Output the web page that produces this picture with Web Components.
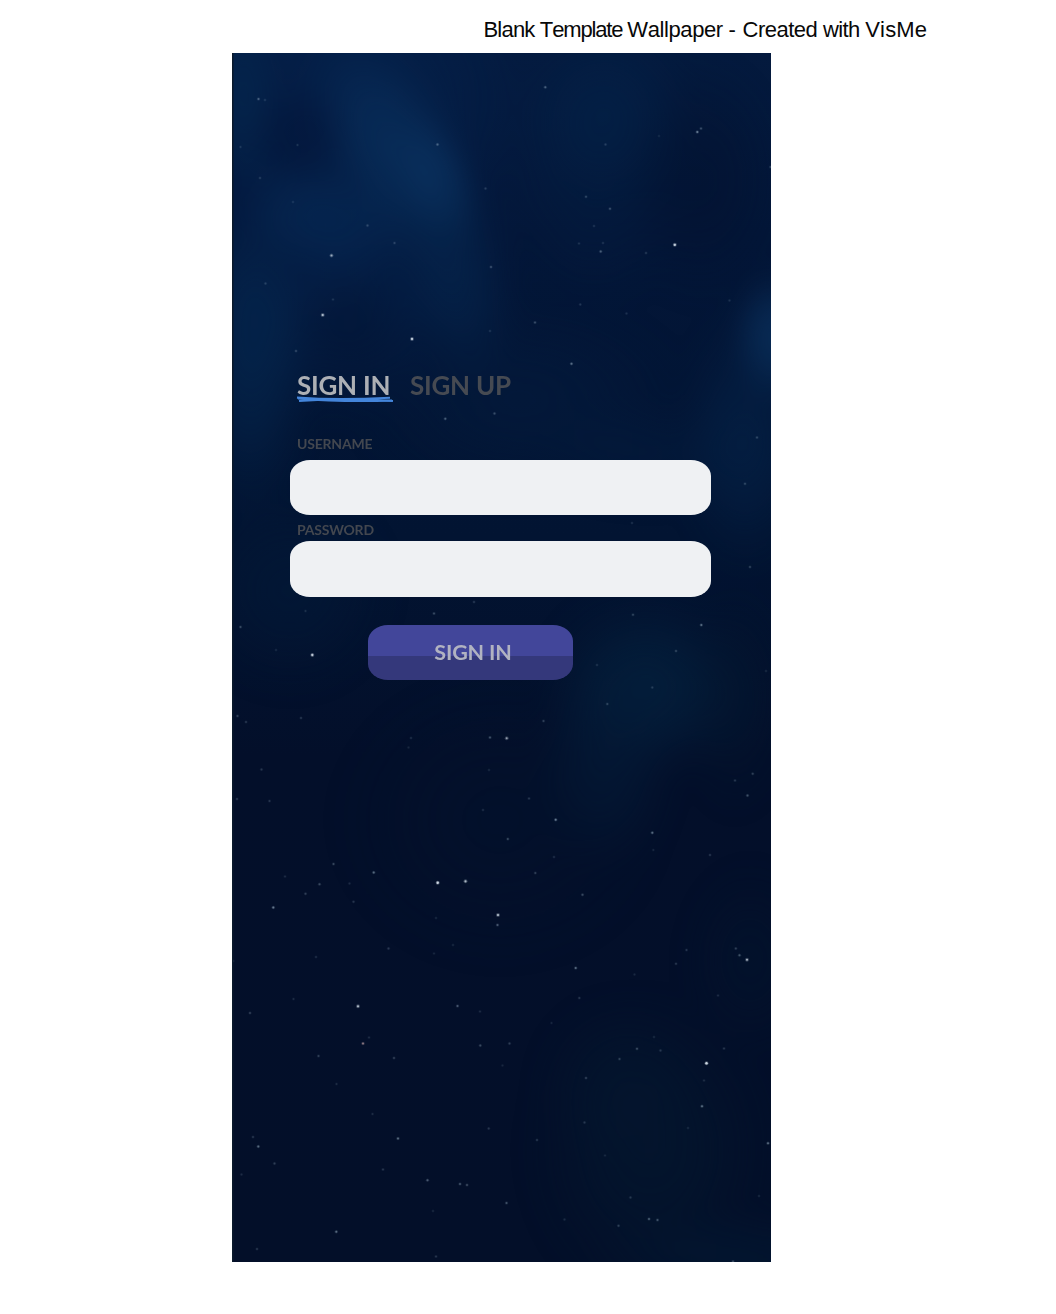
<!DOCTYPE html>
<html lang="en">
<head>
<meta charset="utf-8">
<title>Sign in</title>
<style>
html, body { margin: 0; background: #fff; }
</style>
</head>
<body>
<sign-page></sign-page>
<script>
const define = (name, html, setup) => customElements.define(name, class extends HTMLElement {
  constructor() {
    super();
    this.attachShadow({ mode: 'open' }).innerHTML = html;
    if (setup) setup(this.shadowRoot, this);
  }
});

define('page-caption', `<style>
:host { display: block; font: 22px/26px "Liberation Sans", Arial, sans-serif; color: #080808; }
p { margin: 0; white-space: pre; font-kerning: none; }
</style><p><span style="letter-spacing:-.8px">Blank </span><span style="letter-spacing:-1.15px">Template </span><span style="letter-spacing:-.4px">Wallpaper </span><span style="letter-spacing:.3px">- </span><span style="letter-spacing:-.5px">Created </span><span style="letter-spacing:-.6px">with </span><span style="letter-spacing:.2px">VisMe</span></p>`);

// Each star: x, y, brightness (0-1)
const stars = [
[258.5,99,.4],[265,100,.15],[240.5,147,.15],[297.5,145,.15],[260,178,.18],[293,202,.13],[437.5,144.5,.4],[485.5,188.5,.2],[367.5,225.5,.25],[394.5,243,.22],[331.5,255.5,.7],[491,267,.3],[265.5,283.5,.2],[333,299.5,.15],[322.7,315,.85],[412,339,.9],[490,331,.15],[296,351,.25],
[545.3,87.3,.4],[697.3,132,.6],[701,128.5,.3],[605.5,144.5,.2],[659,136,.1],[770.5,167,.25],[586,196.7,.25],[610,208.7,.3],[594,226,.15],[579,243.5,.15],[603,243,.15],[600.7,251.5,.4],[646,253,.18],[674.8,244.8,.95],[580.3,304.5,.18],[626.5,313.5,.15],[729.5,300.5,.15],[535,322.5,.3],[571.5,363.8,.5],
[445.3,418.7,.4],[494.5,413.5,.3],[757,437.5,.25],[745,483.8,.25],[750,567,.25],[632,523,.15],[474,602,.2],
[240.5,627,.3],[305.5,611,.15],[434,613.5,.3],[276,650,.12],[312.3,655,.9],[237.5,716,.25],[246,722,.2],[301,718,.2],[411,738,.15],[408.5,747.5,.12],[490,737.5,.35],[261.5,769.5,.2],[237,799,.2],[269.5,801,.2],[489,770,.12],[483,810,.15],[333.5,864,.3],[373.7,872.5,.5],[285,876.5,.15],[319.5,884.3,.3],[305.5,893.7,.25],[349.5,883.5,.15],[353.5,901.8,.2],[273.3,907.5,.6],[437.7,882.8,1],[465.5,881.3,.8],[498,915,.85],[497.5,925,.4],[436,918,.12],
[633,614.7,.25],[701.3,625,.5],[676,651,.25],[597,665,.15],[652.3,687.5,.2],[607.3,704,.25],[543.5,721,.25],[506.7,738.3,.65],[766,671,.12],[752.7,773.8,.25],[735,780.5,.2],[747.5,795.5,.35],[529,798.5,.2],[555.7,819.8,.6],[507.8,839,.3],[652.3,832.8,.5],[653.3,850,.12],[710,855,.2],[554,857,.15],[535.3,873,.25],[582.5,894.7,.3],
[388.5,948.5,.22],[316,957,.15],[453,945,.12],[434,953.5,.12],[233,961,.2],[250,1013,.25],[293.5,999,.15],[358,1006.3,.8],[457.5,1006,.4],[480,1011.5,.15],[363,1043.5,.6,1],[369,1037.5,.15],[318.5,1056,.25],[394,1058,.25],[480.3,1045.5,.3],[336.5,1084,.15],[372.5,1114,.15],[488.7,1128.5,.2],[253,1137,.2],[258.3,1146.5,.5],[274.5,1163.5,.25],[398,1138.5,.5],[383,1169.5,.2],[241.5,1174.5,.15],[427.5,1180.3,.4],[460,1184,.35],[467,1185,.3],[336.3,1231.8,.5],[257,1249,.2],[433,1211,.12],[436,1256.5,.2],
[575.7,968,.5],[686.5,950,.2],[676,963.8,.2],[735.8,948.5,.25],[739.5,955.3,.35],[747,959.8,.75],[634.5,974.5,.13],[579.3,998,.2],[718,995.5,.15],[509.5,1043.5,.25],[502.5,1065.5,.12],[551.5,1023,.12],[637,1048.7,.3],[660.5,1050.5,.2],[619.5,1059,.25],[724,1048.5,.2],[654,1037,.12],[706.5,1063.3,1],[704,1080.5,.15],[586,1078,.25],[702,1106.3,.5],[584.5,1122.5,.2],[688,1128,.12],[768,1143.3,.5],[537,1140,.2],[605,1155.5,.12],[506.5,1203,.35],[630.5,1197.5,.2],[759,1196,.12],[649,1219,.4],[657.5,1220,.35],[618.5,1225.7,.25],[564.5,1219.5,.15],[733,1261.5,.3]];

// Nebula glows: cx, cy, rx, ry, rotation, colour, opacity
const glows = [
[345,80,260,200,20,'#052451',.55],
[330,280,210,150,0,'#052551',.55],
[320,215,110,65,15,'#072c59',.5],
[395,150,75,135,-28,'#09305d',.75],
[436,180,42,75,-20,'#0b3463',.6],
[455,270,60,130,-12,'#06274f',.55],
[240,100,45,120,0,'#052a52',.5],
[250,360,70,170,0,'#052850',.65],
[298,135,55,60,0,'#03153a',.55],
[235,200,35,45,0,'#03163f',.45],
[350,330,70,70,0,'#031434',.55],
[605,110,95,100,0,'#04234a',.6],
[595,195,100,120,0,'#042044',.35],
[700,180,90,130,0,'#02102c',.4],
[520,400,180,110,0,'#041d40',.45],
[775,338,50,75,0,'#0a305c',.85],
[745,440,75,140,0,'#05244a',.6],
[650,455,130,60,0,'#041d40',.4],
[290,590,110,110,0,'#031b3a',.5],
[650,685,115,100,15,'#04223f',.75],
[605,760,80,120,0,'#041d3a',.6],
[735,700,60,120,0,'#031830',.4],
[500,820,170,150,0,'#03132d',.4],
[650,1150,130,160,0,'#04182f',.65],
[620,1080,90,90,0,'#04172f',.4],
[750,1260,170,60,0,'#031a34',.5],
[750,960,70,100,0,'#03142d',.5]];

define('night-sky', `
<style>
:host { display: block; }
svg { display: block; width: 539px; height: 1209px; }
</style>
<svg viewBox="232 53 539 1209" aria-hidden="true"></svg>`, root => {
  let defs = '<filter id="soft" x="-20%" y="-20%" width="140%" height="140%" color-interpolation-filters="sRGB"><feGaussianBlur stdDeviation="9"/></filter><linearGradient id="base" x1="0" y1="0" x2="0" y2="1"><stop offset="0" stop-color="#041a3e"/><stop offset=".15" stop-color="#031638"/><stop offset=".4" stop-color="#021432"/><stop offset=".58" stop-color="#030f2a"/><stop offset="1" stop-color="#030f29"/></linearGradient>';
  let body = '<rect x="232" y="53" width="539" height="1209" fill="url(#base)"/><g filter="url(#soft)">';
  glows.forEach(([x, y, rx, ry, rot, c, o], i) => {
    defs += `<radialGradient id="g${i}"><stop offset="0" stop-color="${c}" stop-opacity="${o}"/><stop offset=".4" stop-color="${c}" stop-opacity="${o * .72}"/><stop offset=".75" stop-color="${c}" stop-opacity="${o * .2}"/><stop offset="1" stop-color="${c}" stop-opacity="0"/></radialGradient>`;
    body += `<ellipse cx="${x}" cy="${y}" rx="${rx}" ry="${ry}" transform="rotate(${rot} ${x} ${y})" fill="url(#g${i})"/>`;
  });
  body += '</g>';
  stars.forEach(([x, y, b, warm]) => {
    const c = warm ? '#e0b8b8' : b > .6 ? '#dbe6f0' : '#a2b9cb';
    body += `<circle cx="${x}" cy="${y}" r="${b > .6 ? 2 : 1.8}" fill="${c}" opacity="${b * .3}"/><circle cx="${x}" cy="${y}" r="${b > .6 ? .65 + b * .55 : 1}" fill="${c}" opacity="${b * .9}"/>`;
  });
  body += '<rect x="232" y="53" width="1.5" height="1209" fill="#0a192b"/>';
  root.querySelector('svg').innerHTML = `<defs>${defs}</defs>${body}`;
});

define('auth-tabs', `
<style>
:host { display: flex; gap: 20px; font: 700 26px/32px Lato, sans-serif; letter-spacing: -.25px; white-space: nowrap; }
div { width: 93px; color: #adb0b5; }
.off { width: 110px; color: #464a52; }
svg { display: block; margin: -5px 0 0 0; overflow: visible; }
</style>
<div><slot name="active"></slot><svg width="97" height="7" fill="none" stroke="#4485da" stroke-width="2"><path d="M0 1.6C30 3.8 63 3.4 93 1.7M2 5C32 2.6 64 2.6 96 5" stroke-width="2.1"/><path d="M1 2.4C34 5.3 66 5.5 95 4.5"/></svg></div>
<div class="off"><slot name="other"></slot></div>`);

define('text-field', `
<style>
:host { display: block; }
label { display: block; font: 700 14px/18px Lato, sans-serif; color: #43474f; padding-left: 7px; letter-spacing: -.2px; }
input { display: block; box-sizing: border-box; width: 421px; height: 55.5px; margin-top: var(--gap); border: 0; border-radius: 20px / 16px; background: #eff1f3; outline: 0; padding: 0 20px; font: 18px Lato, sans-serif; }
</style>
<label><slot></slot></label><input>`, (root, host) => {
  root.querySelector('input').type = host.hasAttribute('secret') ? 'password' : 'text';
});

define('submit-button', `
<style>
:host { display: block; }
button { display: block; width: 205px; height: 55px; border: 0; padding: 0 0 0 5px; border-radius: 20px / 16px; background: linear-gradient(#42469a 0 55.5%, #34387b 55.5%); color: #b1b3c1; font: 700 21.5px/55px Lato, sans-serif; letter-spacing: -.15px; }
</style>
<button type="button"><slot></slot></button>`);

define('login-screen', `
<style>
:host { display: grid; width: 539px; height: 1209px; }
night-sky, form { grid-area: 1 / 1; }
form { z-index: 1; display: flex; flex-direction: column; align-items: flex-start; padding: 316px 0 0 58px; }
auth-tabs { height: 37px; margin-left: 7px; }
.user { margin-top: 28.6px; --gap: 7px; }
.pass { margin-top: 5.5px; --gap: 2.5px; }
submit-button { margin: 28px 0 0 78px; }
</style>
<night-sky></night-sky>
<form>
<auth-tabs><span slot="active">SIGN IN</span><span slot="other">SIGN UP</span></auth-tabs>
<text-field class="user">USERNAME</text-field>
<text-field class="pass" secret>PASSWORD</text-field>
<submit-button>SIGN IN</submit-button>
</form>`);

define('sign-page', `
<style>
:host { display: flex; flex-direction: column; box-sizing: border-box; width: 1056px; height: 1314px; overflow: hidden; background: #fff; padding-top: 17px; }
page-caption { margin-left: 483.5px; height: 36px; }
login-screen { margin-left: 232px; }
</style>
<page-caption></page-caption>
<login-screen></login-screen>`);
</script>
</body>
</html>
